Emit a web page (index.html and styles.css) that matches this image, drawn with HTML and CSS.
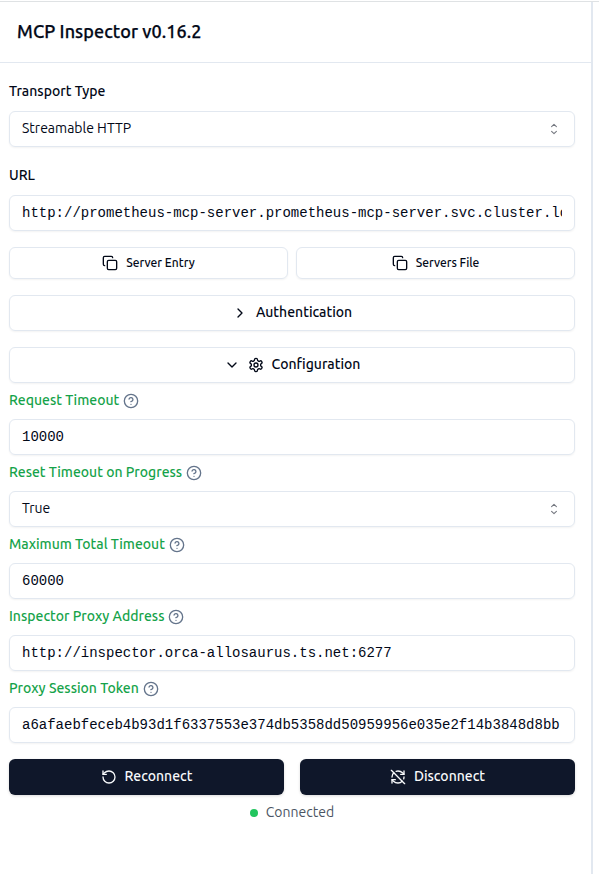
FILE: index.html
```html
<!DOCTYPE html>
<html lang="en">
<head>
<meta charset="utf-8">
<title>MCP Inspector</title>
<link rel="stylesheet" href="styles.css">
</head>
<body>
<svg class="defs" aria-hidden="true">
  <symbol id="copy" viewBox="0 0 24 24"><rect width="14" height="14" x="8" y="8" rx="2"/><path d="M4 16c-1.1 0-2-.9-2-2V4c0-1.1.9-2 2-2h10c1.1 0 2 .9 2 2"/></symbol>
  <symbol id="right" viewBox="0 0 24 24"><path d="m9 18 6-6-6-6"/></symbol>
  <symbol id="down" viewBox="0 0 24 24"><path d="m6 9 6 6 6-6"/></symbol>
  <symbol id="help" viewBox="0 0 24 24"><circle cx="12" cy="12" r="10"/><path d="M9.09 9a3 3 0 0 1 5.83 1c0 2-3 3-3 3"/><path d="M12 17h.01"/></symbol>
  <symbol id="gear" viewBox="0 0 24 24"><path d="M12.22 2h-.44a2 2 0 0 0-2 2v.18a2 2 0 0 1-1 1.73l-.43.25a2 2 0 0 1-2 0l-.15-.08a2 2 0 0 0-2.73.73l-.22.38a2 2 0 0 0 .73 2.73l.15.1a2 2 0 0 1 1 1.72v.51a2 2 0 0 1-1 1.74l-.15.09a2 2 0 0 0-.73 2.73l.22.38a2 2 0 0 0 2.73.73l.15-.08a2 2 0 0 1 2 0l.43.25a2 2 0 0 1 1 1.73V20a2 2 0 0 0 2 2h.44a2 2 0 0 0 2-2v-.18a2 2 0 0 1 1-1.73l.43-.25a2 2 0 0 1 2 0l.15.08a2 2 0 0 0 2.73-.73l.22-.39a2 2 0 0 0-.73-2.73l-.15-.08a2 2 0 0 1-1-1.74v-.5a2 2 0 0 1 1-1.74l.15-.09a2 2 0 0 0 .73-2.73l-.22-.38a2 2 0 0 0-2.73-.73l-.15.08a2 2 0 0 1-2 0l-.43-.25a2 2 0 0 1-1-1.73V4a2 2 0 0 0-2-2z"/><circle cx="12" cy="12" r="3"/></symbol>
  <symbol id="rotate" viewBox="0 0 24 24"><path d="M3 12a9 9 0 1 0 9-9 9.75 9.75 0 0 0-6.74 2.74L3 8"/><path d="M3 3v5h5"/></symbol>
  <symbol id="off" viewBox="0 0 24 24"><path d="M21 8L18.74 5.74A9.75 9.75 0 0 0 12 3C11 3 10.03 3.16 9.13 3.47"/><path d="M8 16H3v5"/><path d="M3 12C3 9.51 4 7.26 5.64 5.64"/><path d="m3 16 2.26 2.26A9.75 9.75 0 0 0 12 21c2.49 0 4.74-1 6.36-2.64"/><path d="M21 12c0 1-.16 1.97-.47 2.87"/><path d="M21 3v5h-5"/><path d="M22 22 2 2"/></symbol>
  <symbol id="sort" viewBox="0 0 15 15"><path d="M5.25 5.25 7.5 3.15l2.25 2.1M5.25 9.75l2.25 2.1 2.25-2.1"/></symbol>
</svg>
<div class="app">
  <aside class="sidebar">
    <header class="header"><h1 class="title">MCP Inspector v0.16.2</h1></header>
    <main class="panel">
      <div class="field">
        <div class="label"><span>Transport Type</span></div>
        <div class="control select"><span>Streamable HTTP</span><svg class="sort"><use href="#sort"/></svg></div>
      </div>
      <div class="field">
        <div class="label"><span>URL</span></div>
        <div class="control mono"><span class="clip">http://prometheus-mcp-server.prometheus-mcp-server.svc.cluster.lo</span></div>
      </div>
      <div class="pair">
        <div class="button small"><svg class="icon"><use href="#copy"/></svg><span>Server Entry</span></div>
        <div class="button small"><svg class="icon"><use href="#copy"/></svg><span>Servers File</span></div>
      </div>
      <div class="button"><svg class="icon"><use href="#right"/></svg><span>Authentication</span></div>
      <div class="config">
        <div class="button"><svg class="icon"><use href="#down"/></svg><svg class="icon"><use href="#gear"/></svg><span>Configuration</span></div>
        <div class="setting"><span>Request Timeout</span><svg class="icon"><use href="#help"/></svg></div>
        <div class="control mono"><span class="clip">10000</span></div>
        <div class="setting"><span>Reset Timeout on Progress</span><svg class="icon"><use href="#help"/></svg></div>
        <div class="control select"><span>True</span><svg class="sort"><use href="#sort"/></svg></div>
        <div class="setting"><span>Maximum Total Timeout</span><svg class="icon"><use href="#help"/></svg></div>
        <div class="control mono"><span class="clip">60000</span></div>
        <div class="setting"><span>Inspector Proxy Address</span><svg class="icon"><use href="#help"/></svg></div>
        <div class="control mono"><span class="clip">http://inspector.orca-allosaurus.ts.net:6277</span></div>
        <div class="setting"><span>Proxy Session Token</span><svg class="icon"><use href="#help"/></svg></div>
        <div class="control mono"><span class="clip">a6afaebfeceb4b93d1f6337553e374db5358dd50959956e035e2f14b3848d8bb</span></div>
      </div>
      <div class="pair actions">
        <div class="button primary"><svg class="icon"><use href="#rotate"/></svg><span>Reconnect</span></div>
        <div class="button primary"><svg class="icon"><use href="#off"/></svg><span>Disconnect</span></div>
      </div>
      <div class="status"><i class="dot"></i><span>Connected</span></div>
    </main>
  </aside>
</div>
</body>
</html>
```
FILE: styles.css
```css
* { box-sizing: border-box; }
body {
  margin: 0;
  background: #fff;
  color: #020817;
  font: 14px/20px Ubuntu, "Noto Sans", sans-serif;
  overflow: hidden;
}
.defs { display: none; }
svg { fill: none; stroke: currentColor; stroke-width: 2; stroke-linecap: round; stroke-linejoin: round; flex: none; }
span { white-space: nowrap; }
.app { height: 874px; padding-top: 1px; }
.app::before { content: ""; display: block; height: 1px; background: #dfe2e4; }
.sidebar { width: 593px; height: 872px; border-right: 2px solid #e2e8f0; }
.header { height: 61px; padding: 15px 17px; border-bottom: 1px solid #e2e8f0; }
.title { margin: 0; font-size: 18px; line-height: 28px; font-weight: 500; letter-spacing: .08px; -webkit-text-stroke: .25px currentColor; white-space: nowrap; }
.panel { padding: 18px 16px 0 9px; display: flex; flex-direction: column; gap: 16px; }
.field { display: flex; flex-direction: column; gap: 10px; margin-bottom: 2px; }
.field + .pair { margin-top: -2px; }
.label { height: 20px; font-weight: 500; }
.control, .button {
  display: flex; align-items: center;
  height: 36px; border: 1px solid #e2e8f0; border-radius: 6px;
  box-shadow: 0 1px 2px rgba(0, 0, 0, .05);
}
.control { padding: 0 12px 2px; }
.select { justify-content: space-between; }
.sort { width: 16px; height: 16px; stroke-width: 1; opacity: .55; position: relative; top: 1px; }
.mono { padding-bottom: 0; font-family: "Liberation Mono", monospace; }
.clip { width: 100%; overflow: hidden; }
.pair { display: flex; gap: 8px; }
.pair .button { flex: 1; }
.actions { gap: 16px; }
.button { justify-content: center; gap: 8px; font-weight: 500; }
.button span { padding-bottom: 2px; }
.button.small { height: 32px; font-size: 12px; }
.button.small span { padding-bottom: 0; }
.icon { width: 16px; height: 16px; }
.config { display: flex; flex-direction: column; gap: 8px; }
.setting { display: flex; align-items: center; gap: 4px; height: 20px; color: #16a34a; font-weight: 500; }
.setting span { padding-bottom: 2px; }
.setting .icon { color: #64748b; }
.primary { background: #0f172a; color: #f8fafc; border: 0; box-shadow: 0 1px 3px rgba(0, 0, 0, .15); }
.status { display: flex; justify-content: center; align-items: center; gap: 8px; height: 20px; margin-top: -8px; color: #4b5563; }
.status span { padding-bottom: 2px; }
.dot { width: 8px; height: 8px; border-radius: 50%; background: #22c55e; }
```
